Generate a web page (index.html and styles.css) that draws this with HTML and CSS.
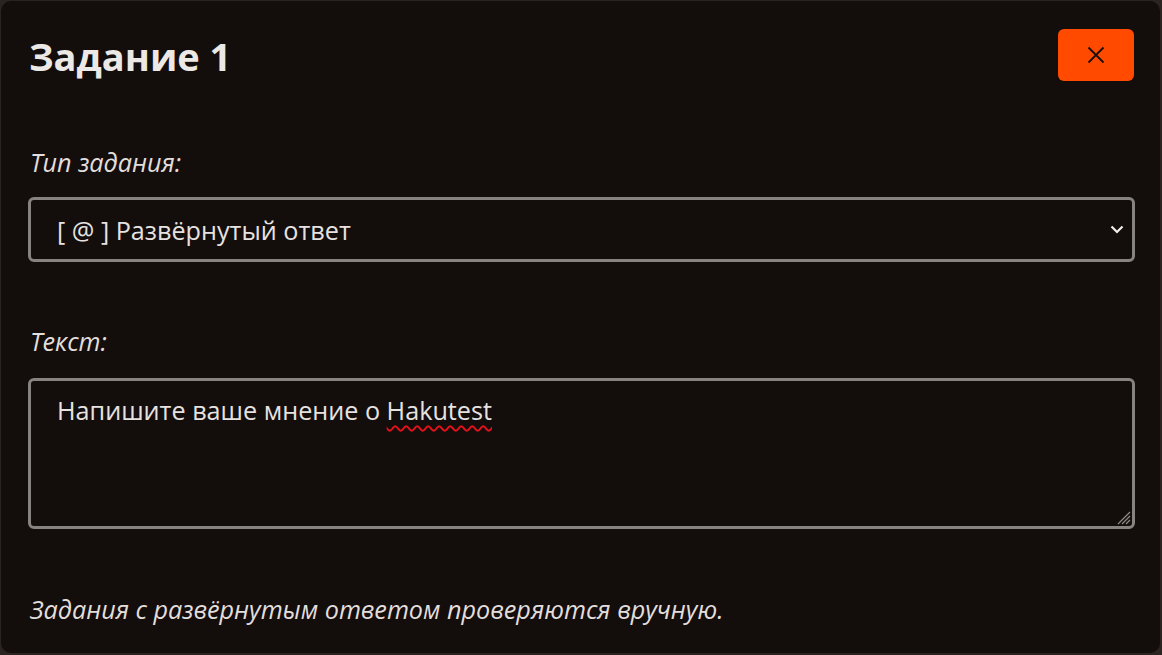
FILE: index.html
```html
<!DOCTYPE html>
<html lang="ru">
<head>
<meta charset="utf-8">
<title>Задание 1</title>
<link rel="stylesheet" href="styles.css">
</head>
<body>
<div class="card">
  <div class="header">
    <h1 class="title">Задание 1</h1>
    <button class="close" type="button" aria-label="Закрыть">
      <svg width="18" height="18" viewBox="0 0 18 18"><path d="M1.5 1.5 L16.5 16.5 M16.5 1.5 L1.5 16.5" stroke="#1a0f0a" stroke-width="1.8" fill="none"/></svg>
    </button>
  </div>
  <div class="field field-type">
    <label class="label">Тип задания:</label>
    <div class="select-wrap">
      <select class="select">
        <option>[ @ ] Развёрнутый ответ</option>
      </select>
      <svg class="chevron" width="14" height="9" viewBox="0 0 14 9"><path d="M1.5 1.5 L7 7 L12.5 1.5" stroke="#f0eeee" stroke-width="2.2" fill="none"/></svg>
    </div>
  </div>
  <div class="field field-text">
    <label class="label">Текст:</label>
    <div class="textarea-wrap">
      <div class="textarea">Напишите ваше мнение о <span class="typo">Hakutest</span></div>
      <svg class="grip" width="16" height="16" viewBox="0 0 16 16"><path d="M15 3 L3 15 M15 7 L7 15 M15 11 L11 15" stroke="#8e8a88" stroke-width="1.2" fill="none"/></svg>
    </div>
  </div>
  <p class="note">Задания с развёрнутым ответом проверяются вручную.</p>
</div>
</body>
</html>
```
FILE: styles.css
```css
html, body {
  margin: 0;
  padding: 0;
  height: 100%;
}
body {
  background: #2a2320;
  color-scheme: dark;
  font-family: "Open Sans", "Noto Sans", sans-serif;
  color: #e6e2e0;
  padding: 1px 2px 2px 1px;
  box-sizing: border-box;
}
.card {
  box-sizing: border-box;
  height: 100%;
  background: #130d0b;
  border-radius: 10px;
  padding: 28px 25px 0 27px;
  display: flex;
  flex-direction: column;
}
.header {
  display: flex;
  justify-content: space-between;
  align-items: center;
  height: 52px;
}
.title {
  margin: 0;
  font-size: 38px;
  font-weight: 700;
  color: #ebe8e6;
  padding-left: 1px;
  padding-top: 2px;
  line-height: 52px;
}
.close {
  width: 76px;
  height: 52px;
  border: none;
  border-radius: 6px;
  background: #ff4a00;
  display: flex;
  align-items: center;
  justify-content: center;
  padding: 0;
  margin-right: 1px;
}
.field {
  display: flex;
  flex-direction: column;
  gap: 18px;
}
.field-type { margin-top: 64px; }
.field-text { margin-top: 62px; gap: 20px; }
.label {
  font-style: italic;
  font-size: 25.2px;
  line-height: 34px;
  color: #e2dedc;
  padding-left: 2px;
}
.select-wrap {
  position: relative;
  display: flex;
}
.select {
  flex: 1;
  appearance: none;
  -webkit-appearance: none;
  height: 65px;
  font-family: "Open Sans", "Noto Sans", sans-serif;
  font-size: 25.2px;
  color: #e6e2e0;
  background: #130d0b;
  border: 3px solid #878381;
  border-radius: 6px;
  padding: 0 40px 0 26px;
  margin: 0;
  outline: none;
}
.chevron {
  position: absolute;
  right: 11px;
  top: 28px;
  pointer-events: none;
}
.textarea-wrap {
  position: relative;
  display: flex;
  flex-direction: column;
}
.textarea {
  box-sizing: border-box;
  height: 151px;
  border: 3px solid #878381;
  border-radius: 6px;
  padding: 12px 26px;
  font-size: 25.2px;
  line-height: 34px;
  color: #e6e2e0;
  overflow: hidden;
}
.grip {
  position: absolute;
  right: 4px;
  bottom: 4px;
  pointer-events: none;
}
.typo {
  text-decoration: underline wavy #e8101a;
  text-decoration-thickness: 1.5px;
  text-underline-offset: 5px;
}
.note {
  margin: 63px 0 0 0;
  font-style: italic;
  font-size: 25.2px;
  line-height: 34px;
  color: #e2dedc;
  padding-left: 2px;
}
```
